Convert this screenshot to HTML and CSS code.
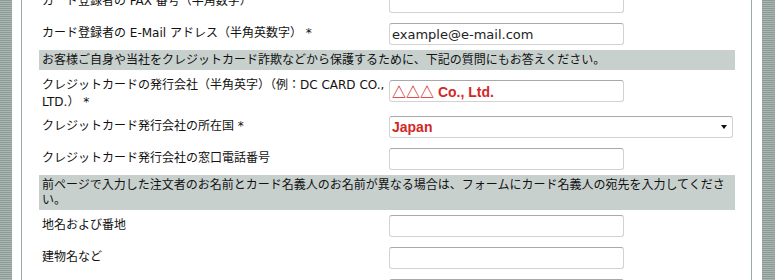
FILE: index.html
```html
<!DOCTYPE html>
<html lang="ja">
<head>
    <meta charset="utf-8">
    <meta name="viewport" content="width=device-width, initial-scale=1">
    <link rel="stylesheet" href="styles.css">
</head>
<body>

<div class="page">
    <div class="stripe"></div>

    <div class="frame">
        <form class="card-form">
            <div class="row">
                <label for="fax">カード登録者の FAX 番号（半角数字）</label>
                <input type="text" id="fax">
            </div>
            <div class="row">
                <label for="email">カード登録者の E-Mail アドレス（半角英数字） *</label>
                <input type="text" id="email" value="example@e-mail.com">
            </div>

            <p class="notice">お客様ご自身や当社をクレジットカード詐欺などから保護するために、下記の質問にもお答えください。</p>

            <div class="row">
                <label for="issuer">クレジットカードの発行会社（半角英字）（例：DC CARD CO., LTD.） *</label>
                <input type="text" id="issuer" class="hint" value="△△△ Co., Ltd.">
            </div>
            <div class="row">
                <label for="country">クレジットカード発行会社の所在国 *</label>
                <div class="select-wrap">
                    <select id="country" class="hint">
                        <option>Japan</option>
                    </select>
                </div>
            </div>
            <div class="row">
                <label for="issuer-tel">クレジットカード発行会社の窓口電話番号</label>
                <input type="text" id="issuer-tel">
            </div>

            <p class="notice">前ページで入力した注文者のお名前とカード名義人のお名前が異なる場合は、フォームにカード名義人の宛先を入力してください。</p>

            <div class="row">
                <label for="street">地名および番地</label>
                <input type="text" id="street">
            </div>
            <div class="row">
                <label for="building">建物名など</label>
                <input type="text" id="building">
            </div>
            <div class="row">
                <label for="city"></label>
                <input type="text" id="city" aria-label="市区町村">
            </div>
        </form>
    </div>

    <div class="stripe stripe-right"></div>
</div>

</body>
</html>
```

FILE: styles.css
```css
html, body {
    height: 100%;
    overflow: hidden;
}
body {
    margin: 0;
    background-color: #fff;
    color: #111;
    font-family: "DejaVu Sans", "Noto Sans CJK JP", sans-serif;
    font-size: 12px;
}
.page {
    display: flex;
    height: 100%;
}
.stripe {
    width: 12px;
    flex: none;
    background: repeating-linear-gradient(to bottom, #8d9b97 0, #8d9b97 1px, #aab6b2 1px, #aab6b2 2px);
}
.stripe-right {
    width: 13px;
}
.frame {
    flex: 1;
    margin: 0 10px 0 9px;
    border-left: 1px solid #9aabab;
    border-right: 1px solid #9aabab;
    background-color: #fff;
}
.card-form {
    margin-top: -14px;
    padding: 0 16px 0 17px;
}
.row {
    display: grid;
    grid-template-columns: 350px 1fr;
    align-items: center;
    min-height: 32px;
}
.row label {
    align-self: start;
    padding: 7px 0 0 3px;
    line-height: 17px;
}
input, select {
    box-sizing: border-box;
    height: 22px;
    margin: 0;
    padding: 0 2px;
    border: 1px solid #d2d2d2;
    border-top-color: #a9a9a9;
    border-radius: 3px;
    background-color: #fff;
    color: #222;
    font-family: "DejaVu Sans", "Noto Sans CJK JP", sans-serif;
    font-size: 13px;
}
input {
    width: 235px;
}
.select-wrap {
    position: relative;
    width: 344px;
}
select {
    width: 100%;
    -webkit-appearance: none;
    appearance: none;
}
.select-wrap::after {
    content: "";
    position: absolute;
    right: 6px;
    top: 9px;
    border-style: solid;
    border-width: 4px 3.5px 0 3.5px;
    border-color: #111 transparent transparent transparent;
    pointer-events: none;
}
.hint {
    color: #d22828;
    font-family: "Liberation Sans", "Noto Sans CJK JP", sans-serif;
    font-weight: bold;
    font-size: 14px;
}
.notice {
    margin: 0;
    padding: 3px 4px 2px 3px;
    line-height: 15px;
    background-color: #c8d0ce;
}
```
